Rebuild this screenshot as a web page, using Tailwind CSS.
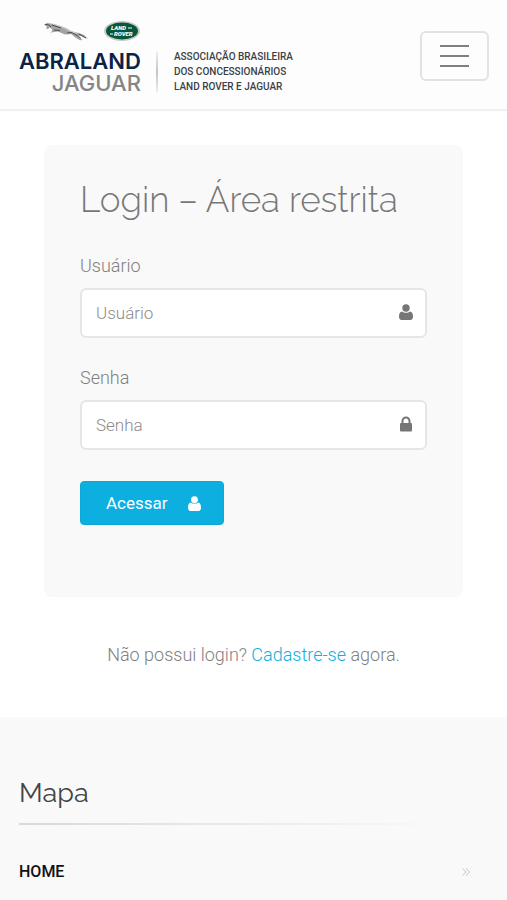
<!DOCTYPE html>
<html lang="pt-BR">
<head>
    <meta charset="UTF-8">
    <meta name="viewport" content="width=device-width, initial-scale=1.0">
    <title>Abraland Jaguar - Login</title>
    <script src="https://cdn.jsdelivr.net/npm/@tailwindcss/browser@4"></script>
</head>
<body class="min-h-screen bg-white font-['Roboto',sans-serif] text-lg font-light text-[#808080]">
    <header class="flex items-start justify-between border-b-2 border-[#f0f0f0] bg-[#fdfdfd] pt-5 pr-[18px] pb-[15px] pl-[19px]">
        <a href="#" class="flex items-end" aria-label="Abraland Jaguar">
            <span class="flex flex-col items-end font-['Inter',sans-serif]">
                <span class="flex items-center gap-3.5">
                    <!-- leaping jaguar -->
                    <svg class="h-[22px] w-[46px]" viewBox="0 0 46 22" fill="none">
                        <path d="M1 4.500L4 3l4 .5 8 2 7 2.500 6 3.500 7 1.500 5 2 4 4-3-1-4-2-4 0 4 3 2 1-3 .3-4-2.300-5-4-6 .5-7-3-4 .6-4 .6 2-1.400L9 9 6.500 7.500 5 9 3 8.500 4 6.500z" fill="#a3a3a3"/>
                        <path d="M2 4.500l4 .5 2 2M9 5l9 3M11 10l6 .5M24 13l5-.5 5 3 4 3M36 14l7 4" stroke="#4d4d4d" stroke-width="1"/>
                        <path d="M10 4l8 2.500 8 4 8 3" stroke="#d0d0d0" stroke-width="1"/>
                    </svg>
                    <!-- land rover oval -->
                    <svg class="h-[22px] w-[38px]" viewBox="0 0 38 22">
                        <ellipse cx="19" cy="11" rx="18" ry="10" fill="#c5cbc8"/>
                        <ellipse cx="19" cy="11" rx="16" ry="8.500" fill="#07583a"/>
                        <g fill="#fff" font-family="Roboto, sans-serif" font-weight="900" font-size="6" font-style="italic">
                            <text x="8" y="10">LAND</text>
                            <text x="11" y="16">ROVER</text>
                        </g>
                        <path d="M25 8h4M7 14h3" stroke="#fff" stroke-width="1"/>
                    </svg>
                </span>
                <span class="mt-2 text-[22px] leading-[22px] font-semibold text-[#0b2345]">ABRALAND</span>
                <span class="text-[22px] leading-[22px] font-medium text-[#858585]">JAGUAR</span>
            </span>
            <span class="mb-0.5 ml-[15px] h-10 w-0.5 bg-linear-to-b from-[#eee] via-[#c4c4c4] to-[#eee]"></span>
            <span class="ml-4 text-[10px] leading-[15px] font-medium whitespace-nowrap text-[#3b3f48]">ASSOCIAÇÃO BRASILEIRA<br>DOS CONCESSIONÁRIOS<br>LAND ROVER E JAGUAR</span>
        </a>
        <button type="button" aria-label="Menu" class="mt-[11px] flex h-[50px] w-[69px] flex-col items-center justify-center gap-2 rounded-md border-2 border-[#e2e2e2]">
            <span class="h-0.5 w-[29px] bg-[#808080]"></span>
            <span class="h-0.5 w-[29px] bg-[#808080]"></span>
            <span class="h-0.5 w-[29px] bg-[#808080]"></span>
        </button>
    </header>

    <main class="px-11 pt-[34px] pb-12">
        <form class="rounded-lg bg-[#f9f9f9] px-9 pt-8 pb-[72px]">
            <h1 class="font-['Raleway','Lato',sans-serif] text-[35px] leading-[45px] font-light whitespace-nowrap text-[#777]">Login – Área restrita</h1>

            <label for="usuario" class="mt-8 block leading-6">Usuário</label>
            <div class="relative mt-2.5">
                <input id="usuario" type="text" placeholder="Usuário" class="h-[50px] w-full rounded-md border-2 border-[#e6e6e6] bg-white pr-10 pl-3.5 text-[17px] placeholder:text-[#8c8c8c]">
                <svg class="absolute top-4 right-3.5 h-4 w-3.5" viewBox="0 0 14 16" fill="#767676">
                    <circle cx="7" cy="4" r="3.700"/>
                    <path d="M3 7.500c1 .8 2.300 1.300 4 1.300s3-.5 4-1.300c2 0 3 2.300 3 5 0 2-1 3.500-2.500 3.500h-9C1 16 0 14.500 0 12.500c0-2.700 1-5 3-5z"/>
                </svg>
            </div>

            <label for="senha" class="mt-7 block leading-6">Senha</label>
            <div class="relative mt-2.5">
                <input id="senha" type="password" placeholder="Senha" class="h-[50px] w-full rounded-md border-2 border-[#e6e6e6] bg-white pr-10 pl-3.5 text-[17px] placeholder:text-[#8c8c8c]">
                <svg class="absolute top-4 right-3.5 h-4 w-3.5" viewBox="0 0 14 16">
                    <path d="M3.500 8V5a3.500 3.500 0 0 1 7 0v3" fill="none" stroke="#767676" stroke-width="2"/>
                    <rect x="1" y="7" width="12" height="8.500" rx="1" fill="#767676"/>
                </svg>
            </div>

            <button type="submit" class="mt-[31px] flex h-11 w-36 items-center justify-between rounded-sm border border-[#0ca8d6] bg-[#0cafdf] pr-[22px] pl-[25px] text-[17px] font-normal text-white">
                Acessar
                <svg class="h-[15px] w-[13px]" viewBox="0 0 14 16" fill="currentColor">
                    <circle cx="7" cy="4" r="3.700"/>
                    <path d="M3 7c1 .8 2.300 1.300 4 1.300S10 7.800 11 7c2 0 3 2.500 3 5.500 0 2-1 3.500-2.500 3.500h-9C1 16 0 14.500 0 12.500 0 9.500 1 7 3 7z"/>
                </svg>
            </button>
        </form>

        <p class="mt-11 text-center leading-7">Não possui login? <a href="#" class="text-[#0cafdf]">Cadastre-se</a> agora.</p>
    </main>

    <footer class="bg-[#f9f9f9] px-[19px] pt-[58px] pb-5">
        <h2 class="font-['Raleway','Lato',sans-serif] text-[27px] leading-9 font-normal text-[#444]">Mapa</h2>
        <div class="mt-3 h-0.5 w-[90%] bg-linear-to-r from-[#d9d9d9] to-[#f9f9f9]"></div>
        <a href="#" class="mt-[35px] flex items-center justify-between pr-[18px] text-base leading-6 font-medium text-[#111]">
            HOME
            <svg class="h-2 w-2" viewBox="0 0 8 8" fill="none" stroke="#c4c4c4" stroke-width="1">
                <path d="M.5.5L4 4 .5 7.500M4 .5L7.500 4 4 7.500"/>
            </svg>
        </a>
    </footer>
</body>
</html>
